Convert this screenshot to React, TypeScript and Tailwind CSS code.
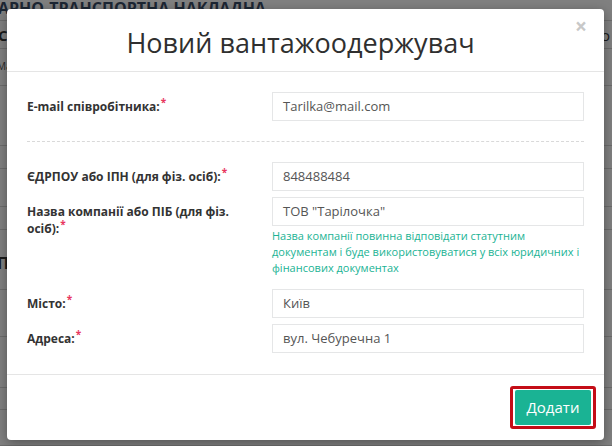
import React from "react";

const font = { fontFamily: '"Open Sans", "Noto Sans", sans-serif' };

function Req() {
  return <span className="relative -top-[5px] ml-[1px] text-[10px] font-bold text-[#e8375f]">*</span>;
}

function Field({ label, value }: { label: React.ReactNode; value?: string }) {
  return (
    <div className="flex">
      <div className="w-[230px] mr-[15px] pt-[6px] text-[12px] leading-[17px] font-bold text-[#333]">{label}</div>
      <div className="flex-1">
        <div className="h-[29px] border border-[#e5e6e7] bg-white pl-[10px] flex items-center text-[13px] text-[#555]">
          {value}
        </div>
      </div>
    </div>
  );
}

export default function App() {
  const rows = [21, 28, 37, 60, 23, 38, 23, 60, 47, 51, 22, 36];
  return (
    <div className="relative w-[612px] h-[446px] overflow-hidden bg-[#808080]" style={font}>
      {/* page behind the overlay */}
      <div className="flex flex-col">
        {rows.map((h, i) => (
          <div key={i} className="border-b border-[#6c6c6c] relative" style={{ height: h }}>
            {i === 0 && (
              <div className="absolute -left-[2px] -top-[4px] text-[16px] font-bold text-[#1c2633] whitespace-nowrap">
                АРНО-ТРАНСПОРТНА НАКЛАДНА
              </div>
            )}
            {i === 1 && (
              <>
                <div className="absolute -left-[2px] top-[3px] text-[15px] font-bold text-[#1a1a1a]">Co</div>
                <div className="absolute left-[601px] top-[3px] text-[15px] text-[#1a1a1a]">o</div>
              </>
            )}
            {i === 2 && <div className="absolute -left-[3px] top-[10px] text-[10px] text-[#2a2a2a]">Ма</div>}
            {i === 7 && <div className="absolute -left-[3px] top-[21px] text-[16px] font-bold text-[#1a1a1a]">П</div>}
          </div>
        ))}
      </div>

      {/* modal */}
      <div className="absolute left-[7px] top-[9px] w-[597px] bg-white rounded-[4px] shadow-[0_3px_12px_rgba(0,0,0,0.35)] flex flex-col">
        <div className="relative h-[63px] border-b border-[#e5e5e5] flex items-center justify-center">
          <div className="text-[27px] text-[#2f2f2f] leading-none pr-[10px] pt-[5px]">Новий вантажоодержувач</div>
          <div className="absolute right-[17px] top-[7px] text-[21px] font-bold text-[#c8c8c8] leading-none">×</div>
        </div>

        <div className="px-[20px] pt-[20px] pb-[21px] flex flex-col">
          <Field
            label={
              <>
                E-mail співробітника:<Req />
              </>
            }
            value="Tarilka@mail.com"
          />
          <div className="my-[20px] border-t border-dashed border-[#d9d9d9]" />
          <div className="flex flex-col gap-[6px]">
            <Field
              label={
                <>
                  ЄДРПОУ або ІПН (для фіз. осіб):<Req />
                </>
              }
              value="848488484"
            />
            <div className="flex">
              <div className="w-[230px] mr-[15px] pt-[6px] text-[12px] leading-[17px] font-bold text-[#333]">
                Назва компанії або ПІБ (для фіз. осіб):<Req />
              </div>
              <div className="flex-1">
                <div className="h-[29px] border border-[#e5e6e7] bg-white pl-[10px] flex items-center text-[13px] text-[#555]">
                  ТОВ "Тарілочка"
                </div>
                <div className="mt-[2px] mb-[7px] text-[11px] leading-[16px] text-[#1ab394]">
                  Назва компанії повинна відповідати статутним документам і буде використовуватися у всіх юридичних і фінансових документах
                </div>
              </div>
            </div>
            <Field
              label={
                <>
                  Місто:<Req />
                </>
              }
              value="Київ"
            />
            <Field
              label={
                <>
                  Адреса:<Req />
                </>
              }
              value="вул. Чебуречна 1"
            />
          </div>
        </div>

        <div className="border-t border-[#e5e5e5] pt-[11px] pb-[11px] pr-[8px] flex justify-end">
          <div className="border-[3px] border-[#c40d17] rounded-[3px] py-[1px] px-[2px] bg-white">
            <div className="w-[76px] h-[35px] bg-[#1ab394] rounded-[2px] flex items-center justify-center text-[15px] text-white">
              Додати
            </div>
          </div>
        </div>
      </div>
    </div>
  );
}
